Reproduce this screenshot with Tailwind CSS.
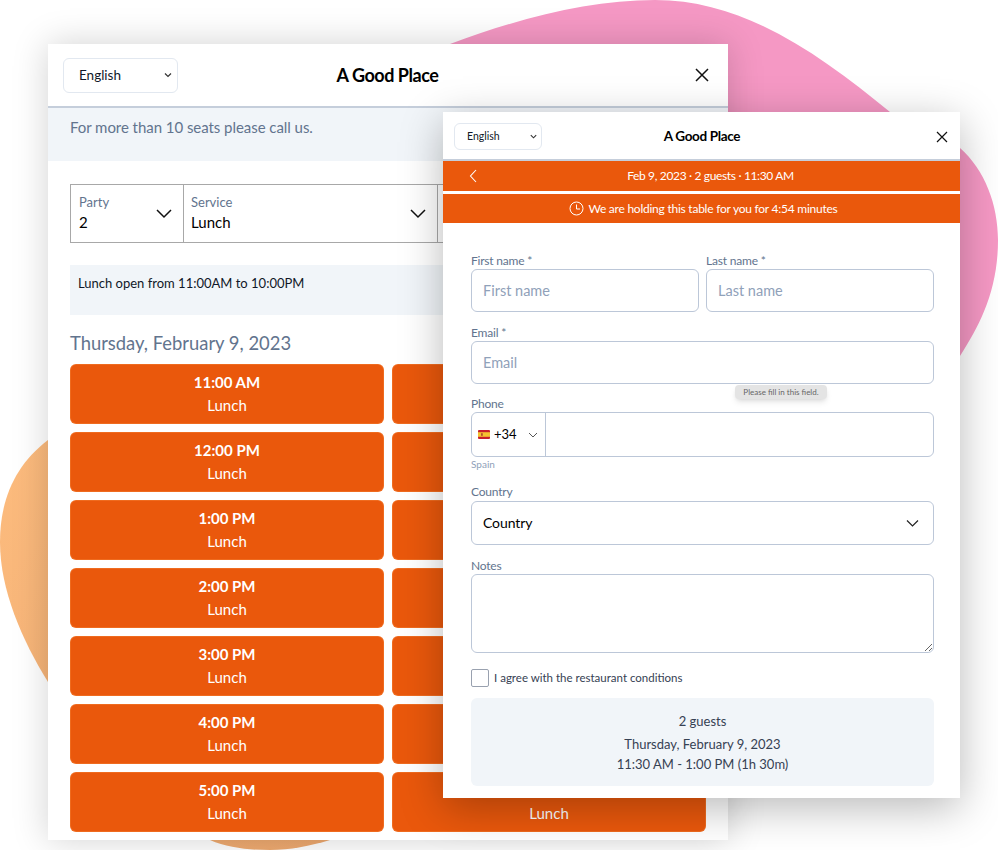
<!DOCTYPE html>
<html lang="en">

<head>
  <meta charset="UTF-8">
  <title>A Good Place</title>
  <script src="https://cdn.jsdelivr.net/npm/@tailwindcss/browser@4"></script>
</head>

<body class="bg-white font-['Lato',sans-serif]">
  <div class="relative w-[998px] h-[850px] overflow-hidden">
    <!-- background blobs -->
    <svg class="absolute top-0 left-0" width="998" height="850" viewBox="0 0 998 850">
      <defs>
        <linearGradient id="orange" x1="0" y1="0" x2="1" y2="1">
          <stop offset="0" stop-color="#fdbc7e" />
          <stop offset="1" stop-color="#eba66d" />
        </linearGradient>
      </defs>
      <path fill="#f598c4" d="M450 44 C520 18 590 0 655 0 C745 0 820 55 890 112 C915 125 940 135 960 148 C985 170 998 205 998 240 C998 290 980 325 960 356 L700 400 L450 100 Z" />
      <path fill="url(#orange)" d="M48 440 C15 465 0 500 0 542 C0 590 22 640 48 682 L210 840 C228 848 250 850 270 850 C290 850 310 846 330 840 L400 600 L100 430 Z" />
    </svg>

    <!-- booking window -->
    <div class="absolute left-[48px] top-[44px] w-[680px] h-[796px] bg-white shadow-[0_0_34px_rgba(0,0,0,0.18)] overflow-hidden">
      <header class="h-[64px] grid grid-cols-[1fr_auto_1fr] items-center pl-[15px] pr-[18px] border-b-2 border-[#c5cedb]">
        <div class="w-[115px] h-[35px] border border-slate-200 rounded-md flex items-center justify-between pl-[15px] pr-[4px] text-[13.5px] text-gray-900">
          English
          <svg class="w-[10px] h-[10px]" viewBox="0 0 10 10" fill="none" stroke="#333" stroke-width="1.2"><path d="M2 3.5 5 6.5 8 3.5" /></svg>
        </div>
        <h1 class="ml-[2px] text-lg font-bold tracking-tight text-black">A Good Place</h1>
        <svg class="justify-self-end w-[16px] h-[16px]" viewBox="0 0 16 16" fill="none" stroke="#111" stroke-width="1.5"><path d="M2 2 14 14M14 2 2 14" /></svg>
      </header>
      <div class="h-[53px] bg-slate-100 px-[22px] pt-[8px] text-[15px] tracking-[-0.05px] text-slate-500">For more than 10 seats please call us.</div>

      <div class="px-[22px] pt-[23px]">
        <div class="h-[59px] flex border border-[#a8a8a8]">
          <div class="w-[113px] border-r border-[#a8a8a8] flex items-center justify-between pl-[8px] pr-[11px]">
            <div class="pb-[2px]">
              <div class="text-[13px] leading-[18px] text-slate-500">Party</div>
              <div class="text-[15px] leading-[22px] text-black">2</div>
            </div>
            <svg class="w-[16px] h-[16px]" viewBox="0 0 16 16" fill="none" stroke="#111" stroke-width="1.5"><path d="M1 4 8 11 15 4" /></svg>
          </div>
          <div class="w-[254px] border-r border-[#a8a8a8] flex items-center justify-between pl-[7px] pr-[11px]">
            <div class="pb-[2px]">
              <div class="text-[13px] leading-[18px] text-slate-500">Service</div>
              <div class="text-[15px] leading-[22px] text-black">Lunch</div>
            </div>
            <svg class="w-[16px] h-[16px]" viewBox="0 0 16 16" fill="none" stroke="#111" stroke-width="1.5"><path d="M1 4 8 11 15 4" /></svg>
          </div>
        </div>

        <div class="h-[50px] mt-[22px] bg-slate-100 px-[8px] pt-[9px] text-[13px] text-gray-900">Lunch open from 11:00AM to 10:00PM</div>
        <h2 class="mt-[14px] text-[18.4px] leading-[28px] text-slate-500">Thursday, February 9, 2023</h2>

        <div class="mt-[7px] grid grid-cols-2 gap-x-[8px] gap-y-[8px] text-white">
          <button class="h-[60px] bg-[#ea580c] rounded-md border border-orange-300/20"><div class="font-bold text-[15px] leading-[20px]">11:00 AM</div><div class="mt-[2px] text-[15px] leading-[23px]">Lunch</div></button>
          <button class="h-[60px] bg-[#ea580c] rounded-md border border-orange-300/20"></button>
          <button class="h-[60px] bg-[#ea580c] rounded-md border border-orange-300/20"><div class="font-bold text-[15px] leading-[20px]">12:00 PM</div><div class="mt-[2px] text-[15px] leading-[23px]">Lunch</div></button>
          <button class="h-[60px] bg-[#ea580c] rounded-md border border-orange-300/20"></button>
          <button class="h-[60px] bg-[#ea580c] rounded-md border border-orange-300/20"><div class="font-bold text-[15px] leading-[20px]">1:00 PM</div><div class="mt-[2px] text-[15px] leading-[23px]">Lunch</div></button>
          <button class="h-[60px] bg-[#ea580c] rounded-md border border-orange-300/20"></button>
          <button class="h-[60px] bg-[#ea580c] rounded-md border border-orange-300/20"><div class="font-bold text-[15px] leading-[20px]">2:00 PM</div><div class="mt-[2px] text-[15px] leading-[23px]">Lunch</div></button>
          <button class="h-[60px] bg-[#ea580c] rounded-md border border-orange-300/20"></button>
          <button class="h-[60px] bg-[#ea580c] rounded-md border border-orange-300/20"><div class="font-bold text-[15px] leading-[20px]">3:00 PM</div><div class="mt-[2px] text-[15px] leading-[23px]">Lunch</div></button>
          <button class="h-[60px] bg-[#ea580c] rounded-md border border-orange-300/20"></button>
          <button class="h-[60px] bg-[#ea580c] rounded-md border border-orange-300/20"><div class="font-bold text-[15px] leading-[20px]">4:00 PM</div><div class="mt-[2px] text-[15px] leading-[23px]">Lunch</div></button>
          <button class="h-[60px] bg-[#ea580c] rounded-md border border-orange-300/20"></button>
          <button class="h-[60px] bg-[#ea580c] rounded-md border border-orange-300/20"><div class="font-bold text-[15px] leading-[20px]">5:00 PM</div><div class="mt-[2px] text-[15px] leading-[23px]">Lunch</div></button>
          <button class="h-[60px] bg-[#ea580c] rounded-md border border-orange-300/20 pt-[20px]"><div class="mt-[2px] text-[15px] leading-[23px]">Lunch</div></button>
        </div>
      </div>
    </div>

    <!-- reservation form window -->
    <div class="absolute left-[443px] top-[112px] w-[517px] h-[686px] bg-white shadow-[0_10px_40px_rgba(0,0,0,0.28)]">
      <header class="h-[49px] pt-[2px] grid grid-cols-[1fr_auto_1fr] items-center pl-[11px] pr-[12px] border-b-2 border-[#c5cedb]">
        <div class="w-[88px] h-[27px] border border-slate-200 rounded-md flex items-center justify-between pl-[12px] pr-[3px] text-[10.5px] text-gray-900">
          English
          <svg class="w-[9px] h-[9px]" viewBox="0 0 10 10" fill="none" stroke="#333" stroke-width="1.2"><path d="M2 3.5 5 6.5 8 3.5" /></svg>
        </div>
        <h1 class="ml-[2px] text-[13.5px] font-bold tracking-tight text-black">A Good Place</h1>
        <svg class="justify-self-end w-[12px] h-[12px]" viewBox="0 0 12 12" fill="none" stroke="#111" stroke-width="1.2"><path d="M1 1 11 11M11 1 1 11" /></svg>
      </header>
      <div class="h-[30px] bg-[#ea580c] relative flex items-center justify-center pl-[18px] text-xs tracking-[-0.35px] text-white">
        <svg class="absolute left-[26px] top-[8px] w-[9px] h-[14px]" viewBox="0 0 9 14" fill="none" stroke="#fff" stroke-width="1.1"><path d="M7 1 1.5 7 7 13" /></svg>
        <span>Feb 9, 2023 · 2 guests · 11:30 AM</span>
      </div>
      <div class="h-[29px] mt-[3px] bg-[#ea580c] flex items-center justify-center gap-[4px] pl-[4px] text-xs tracking-[-0.24px] text-white">
        <svg class="w-[15px] h-[15px]" viewBox="0 0 15 15" fill="none" stroke="#fff" stroke-width="1"><circle cx="7.5" cy="7.5" r="6.5" /><path d="M7.5 3.5V8H11" /></svg>
        <span>We are holding this table for you for 4:54 minutes</span>
      </div>

      <form class="pl-[28px] pr-[26px] pt-[30px] flex flex-col">
        <div class="grid grid-cols-2 gap-x-[7px]">
          <label class="block text-xs leading-[16px] tracking-[-0.2px] text-slate-500">First name *
            <input placeholder="First name" class="block w-full h-[43px] px-[11px] border border-[#bcc7d8] rounded-md text-[14.5px] tracking-normal placeholder:text-slate-400">
          </label>
          <label class="block text-xs leading-[16px] tracking-[-0.2px] text-slate-500">Last name *
            <input placeholder="Last name" class="block w-full h-[43px] px-[11px] border border-[#bcc7d8] rounded-md text-[14.5px] tracking-normal placeholder:text-slate-400">
          </label>
        </div>

        <label class="relative block mt-[13px] text-xs leading-[16px] tracking-[-0.2px] text-slate-500">Email *
          <input placeholder="Email" class="block w-full h-[43px] px-[11px] border border-[#bcc7d8] rounded-md text-[14.5px] tracking-normal placeholder:text-slate-400">
          <span class="absolute left-[264px] top-[60px] w-[92px] h-[14px] rounded-sm bg-[#e4e4e4] shadow-md text-center text-[8px] leading-[14px] tracking-normal text-[#666]">Please fill in this field.</span>
        </label>

        <div class="mt-[12px] text-xs leading-[16px] tracking-[-0.2px] text-slate-500">Phone</div>
        <div class="h-[45px] border border-[#bcc7d8] rounded-md flex">
          <div class="w-[74px] border-r border-[#bcc7d8] flex items-center pl-[6px] gap-[4px] text-[13px] text-black">
            <svg class="w-[12px] h-[9px] shrink-0" viewBox="0 0 12 9"><rect width="12" height="9" rx="1" fill="#c8202c" /><rect y="2.2" width="12" height="4.6" fill="#f5c330" /><rect x="3" y="3.2" width="1.8" height="2.6" fill="#b5502c" /></svg>
            <span class="pt-[1px]">+34</span>
            <svg class="ml-[7px] w-[10px] h-[10px]" viewBox="0 0 10 10" fill="none" stroke="#444" stroke-width="0.9"><path d="M1 3 5 7 9 3" /></svg>
          </div>
          <input class="flex-1 min-w-0 px-[12px] text-sm">
        </div>
        <div class="text-[10px] leading-[14px] text-slate-400">Spain</div>

        <div class="mt-[13px] text-xs leading-[16px] tracking-[-0.2px] text-slate-500">Country</div>
        <div class="mt-[1px] h-[44px] border border-[#bcc7d8] rounded-md flex items-center justify-between pl-[11px] pr-[14px] text-sm tracking-[-0.1px] text-black">
          Country
          <svg class="w-[13px] h-[13px]" viewBox="0 0 13 13" fill="none" stroke="#222" stroke-width="1.2"><path d="M1 3.5 6.5 9 12 3.5" /></svg>
        </div>

        <div class="mt-[13px] text-xs leading-[16px] tracking-[-0.2px] text-slate-500">Notes</div>
        <textarea class="block w-full h-[79px] border border-[#bcc7d8] rounded-md"></textarea>

        <label class="mt-[16px] flex items-center gap-[5px] text-[11.5px] text-gray-700">
          <span class="w-[18px] h-[18px] border border-gray-400 rounded-[2px] bg-white"></span>
          I agree with the restaurant conditions
        </label>

        <div class="mt-[11px] h-[88px] bg-slate-100 rounded-md flex flex-col items-center text-[13px] text-gray-700 pt-[13px]">
          <div class="leading-[20px]">2 guests</div>
          <div class="mt-[3px] leading-[20px]">Thursday, February 9, 2023</div>
          <div class="leading-[21px]">11:30 AM - 1:00 PM (1h 30m)</div>
        </div>
      </form>
    </div>
  </div>
</body>

</html>
